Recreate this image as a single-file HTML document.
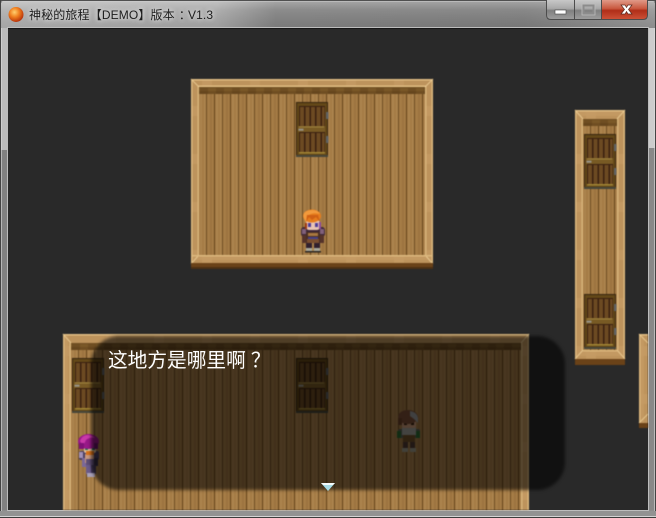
<!DOCTYPE html>
<html lang="zh"><head><meta charset="utf-8"><title>神秘的旅程</title>
<style>
html,body{margin:0;padding:0;background:#8c8c8c}
#w{position:relative;width:656px;height:518px;overflow:hidden;font-family:"Liberation Sans","Noto Sans CJK SC",sans-serif}
svg{position:absolute;left:0;top:0}
#title{position:absolute;left:29px;top:7px;font-size:12px;line-height:16px;color:#1c1c1c;white-space:nowrap;letter-spacing:.14px;text-shadow:0 0 5px #ddd,0 0 5px #ddd}
#msg{position:absolute;left:108px;top:347px;font-size:19.7px;line-height:24px;color:#fff;white-space:nowrap}
.tc{font-family:"Noto Sans CJK TC",sans-serif;position:relative}
</style></head><body><div id="w">
<svg width="656" height="518" viewBox="0 0 656 518" xmlns="http://www.w3.org/2000/svg">
<defs>
<linearGradient id="tb" x1="0" x2="1" y1="0" y2="0"><stop offset="0" stop-color="#b0b0b0"/><stop offset=".33" stop-color="#a8a8a8"/><stop offset=".42" stop-color="#828282"/><stop offset=".8" stop-color="#7e7e7e"/><stop offset="1" stop-color="#969696"/></linearGradient>
<linearGradient id="tv" x1="0" x2="0" y1="0" y2="1"><stop offset="0" stop-color="#fff" stop-opacity=".32"/><stop offset=".35" stop-color="#fff" stop-opacity=".08"/><stop offset="1" stop-color="#000" stop-opacity=".06"/></linearGradient>
<linearGradient id="cl" x1="0" x2="0" y1="0" y2="1"><stop offset="0" stop-color="#e09a88"/><stop offset=".45" stop-color="#c9583f"/><stop offset=".55" stop-color="#b02e18"/><stop offset="1" stop-color="#cc5036"/></linearGradient>
<linearGradient id="bt" x1="0" x2="0" y1="0" y2="1"><stop offset="0" stop-color="#c8c8c8"/><stop offset=".45" stop-color="#a8a8a8"/><stop offset=".55" stop-color="#808080"/><stop offset="1" stop-color="#9c9c9c"/></linearGradient>
<radialGradient id="orb" cx=".4" cy=".35" r=".7"><stop offset="0" stop-color="#ffd070"/><stop offset=".45" stop-color="#f08020"/><stop offset="1" stop-color="#b02808"/></radialGradient>
<pattern id="pl" width="16" height="24" patternUnits="userSpaceOnUse" x="199">
<rect width="16" height="24" fill="#a57c46"/>
<rect x="1" width="6" height="24" fill="#ac844e"/>
<rect x="3" width="2" height="24" fill="#a47b45"/>
<rect x="11" width="2" height="24" fill="#9c7340"/>
<rect x="7" width="1" height="24" fill="#6e4c22"/>
<rect x="15" width="1" height="24" fill="#66451c"/>
</pattern>
<pattern id="wl" width="16" height="8" patternUnits="userSpaceOnUse"><rect width="16" height="8" fill="#6f4e22"/><rect width="8" height="3" fill="#7a5828"/><rect x="8" y="3" width="8" height="3" fill="#66461e"/></pattern>
<pattern id="fr" width="48" height="48" patternUnits="userSpaceOnUse"><rect width="48" height="48" fill="#bd935c"/><rect x="10" y="0" width="10" height="48" fill="#c69c66" opacity=".6"/><rect x="0" y="10" width="48" height="10" fill="#c69c66" opacity=".6"/></pattern>
<g id="door">
<rect width="32" height="55" fill="#38260f"/>
<rect x="1" y="1" width="30" height="53" fill="#644818"/>
<rect x="3" y="4" width="26" height="20" fill="#3a2010"/>
<rect x="3" y="30" width="26" height="20" fill="#3a2010"/>
<g fill="#6c4a22">
<rect x="4" y="5" width="4" height="19"/><rect x="9.500" y="5" width="4" height="19"/><rect x="15" y="5" width="4" height="19"/><rect x="20.500" y="5" width="4" height="19"/><rect x="26" y="5" width="2.500" height="19"/>
<rect x="4" y="31" width="4" height="19"/><rect x="9.500" y="31" width="4" height="19"/><rect x="15" y="31" width="4" height="19"/><rect x="20.500" y="31" width="4" height="19"/><rect x="26" y="31" width="2.500" height="19"/>
</g>
<rect x="2" y="24" width="27" height="6" fill="#785a24"/>
<rect x="3" y="24.500" width="25" height="1" fill="#a08440"/>
<rect x="3" y="50" width="26" height="1.600" fill="#a08434"/>
<rect x="2.500" y="26.700" width="5" height="2" fill="#98948a"/>
<rect x="30" y="10" width="2.400" height="7" fill="#5c6064"/>
<rect x="30" y="34" width="2.400" height="7" fill="#5c6064"/>
<rect x="0" y="53" width="32" height="2" fill="#46463a"/>
</g>
</defs>

<rect width="656" height="518" fill="#8c8c8c"/>
<rect width="656" height="28" fill="url(#tb)"/>
<rect width="656" height="28" fill="url(#tv)"/>
<path d="M0 0h6q-5 0-6 6zM656 0h-6q5 0 6 6z" fill="#3a3a3a"/>
<rect x="0" y="0" width="656" height="1" fill="#505050"/>
<rect x="1" y="1" width="654" height="1" fill="#d0d0d0" opacity=".5"/>
<rect x="0" y="28" width="8" height="122" fill="#bcbcbc"/>
<rect x="648" y="28" width="8" height="120" fill="#cccccc"/>
<rect x="0" y="150" width="8" height="360" fill="#828282"/>
<rect x="648" y="148" width="8" height="362" fill="#888888"/>
<rect x="0" y="0" width="1" height="518" fill="#444"/>
<rect x="655" y="0" width="1" height="518" fill="#444"/>
<rect x="1" y="28" width="1" height="490" fill="#dcdcdc" opacity=".6"/>
<rect x="654" y="28" width="1" height="490" fill="#dcdcdc" opacity=".6"/>
<rect x="7" y="27" width="642" height="484" fill="#bdbdbd"/>
<rect x="0" y="511" width="656" height="7" fill="#929292"/>
<rect x="0" y="516" width="656" height="1" fill="#d4d4d4"/>
<rect x="0" y="517" width="656" height="1" fill="#3c3c3c"/>

<circle cx="16" cy="14.500" r="7.500" fill="url(#orb)"/>

<!-- buttons -->
<path d="M546 0v15q0 5 5 5h92q5 0 5-5V0z" fill="#4c4c4c"/>
<path d="M547 0v15q0 4 4 4h23V0z" fill="url(#bt)"/>
<rect x="575" y="0" width="26" height="19" fill="url(#bt)"/>
<path d="M602 0v19h41q4 0 4-4V0z" fill="url(#cl)"/>
<rect x="555" y="10" width="11" height="4" fill="#fff" stroke="#444" stroke-width=".6"/>
<rect x="583.500" y="5.500" width="10" height="8" fill="none" stroke="#8c8c8c" stroke-width="2"/>
<rect x="582" y="4" width="13" height="11" fill="none" stroke="#bcbcbc" stroke-width=".8"/>
<path d="M621 5l4 0 1.500 2.500L628 5h4l-3.500 4.500 3.500 4.500h-4l-1.500-2.500L625 14h-4l3.500-4.500z" fill="#fff" stroke="#5a2a20" stroke-width=".7"/>

<!-- client -->
<rect x="8" y="28" width="640" height="482" fill="#292929"/>
<rect x="8" y="28" width="640" height="1" fill="#161616"/>

<g style="filter:blur(.5px)">
<!-- Room 1 -->
<rect x="191" y="79" width="242" height="190" fill="url(#fr)"/>
<rect x="199" y="87" width="226" height="168" fill="url(#pl)"/>
<rect x="199" y="87" width="226" height="7" fill="url(#wl)"/>
<rect x="191" y="79" width="242" height="1.500" fill="#e2bf85"/>
<rect x="191" y="79" width="1.500" height="185" fill="#dcb87e"/>
<rect x="431.500" y="79" width="1.500" height="185" fill="#dcb87e"/>
<rect x="197.500" y="85.500" width="229" height="1.500" fill="#e2bf85"/>
<rect x="197.500" y="87" width="1.500" height="168" fill="#d8b47a"/>
<rect x="425" y="87" width="1.500" height="168" fill="#d8b47a"/>
<path d="M191 79l8 8M433 79l-8 8M191 264l8-9M433 264l-8-9" stroke="#e6c68e" stroke-width="1"/>
<rect x="191" y="255" width="242" height="1.500" fill="#dcb87e"/>
<rect x="191" y="263" width="242" height="6" fill="#6a4218"/>
<rect x="191" y="267" width="242" height="2" fill="#4c3014"/>
<use href="#door" x="296" y="102"/>

<!-- Room 2 -->
<rect x="575" y="110" width="50" height="255" fill="url(#fr)"/>
<rect x="583" y="119" width="34" height="231" fill="url(#pl)"/>
<rect x="583" y="119" width="34" height="7" fill="url(#wl)"/>
<rect x="575" y="110" width="50" height="1.500" fill="#e2bf85"/>
<rect x="575" y="110" width="1.500" height="249" fill="#dcb87e"/>
<rect x="623.500" y="110" width="1.500" height="249" fill="#dcb87e"/>
<rect x="581.500" y="119" width="1.500" height="231" fill="#d8b47a"/>
<rect x="617" y="119" width="1.500" height="231" fill="#d8b47a"/>
<rect x="583" y="350" width="34" height="1.500" fill="#dcb87e"/>
<path d="M575 110l8 9M625 110l-8 9M575 359l8-9M625 359l-8-9" stroke="#e6c68e" stroke-width="1"/>
<rect x="575" y="359" width="50" height="6" fill="#6a4218"/>
<use href="#door" x="584" y="134"/>
<use href="#door" x="584" y="294"/>

<!-- Room 3 -->
<rect x="639" y="334" width="9" height="94" fill="url(#fr)"/>
<rect x="639" y="334" width="1.500" height="89" fill="#dcb87e"/>
<rect x="639" y="334" width="9" height="1.500" fill="#e2bf85"/>
<path d="M639 334l9 9M639 423l9-9" stroke="#e6c68e" stroke-width="1"/>
<rect x="639" y="423" width="9" height="5" fill="#6a4218"/>

<!-- Room 4 -->
<rect x="63" y="334" width="466" height="176" fill="url(#fr)"/>
<rect x="71" y="343" width="450" height="167" fill="url(#pl)"/>
<rect x="71" y="343" width="450" height="7" fill="url(#wl)"/>
<rect x="63" y="334" width="466" height="1.500" fill="#e2bf85"/>
<rect x="63" y="334" width="1.500" height="176" fill="#dcb87e"/>
<rect x="527.500" y="334" width="1.500" height="176" fill="#dcb87e"/>
<rect x="69.500" y="343" width="1.500" height="167" fill="#d8b47a"/>
<rect x="521" y="343" width="1.500" height="167" fill="#d8b47a"/>
<path d="M63 334l8 9M529 334l-8 9" stroke="#e6c68e" stroke-width="1"/>
<use href="#door" x="72" y="358"/>
<use href="#door" x="296" y="358"/>

<!-- Hero -->
<g>
<rect x="301" y="227" width="24" height="10" rx="3" fill="#3e2838"/>
<rect x="302" y="229" width="4" height="5" fill="#80607a"/>
<rect x="320" y="229" width="4" height="5" fill="#80607a"/>
<rect x="302" y="235" width="5" height="8" fill="#55332a"/>
<rect x="319" y="235" width="5" height="8" fill="#55332a"/>
<rect x="306" y="232" width="14" height="11" fill="#4a2e24"/>
<rect x="308" y="233" width="10" height="3" fill="#a87840"/>
<rect x="308" y="237" width="10" height="2" fill="#44408a"/>
<rect x="307" y="239" width="12" height="4" fill="#7a4e30"/>
<rect x="306" y="243" width="6" height="6" fill="#30202e"/>
<rect x="314" y="243" width="6" height="6" fill="#30202e"/>
<rect x="306" y="248" width="6" height="3" fill="#a8a89a"/>
<rect x="314" y="248" width="6" height="3" fill="#a8a89a"/>
<rect x="305" y="251" width="16" height="1.500" fill="#2a2420"/>
<rect x="306" y="220" width="14" height="10" rx="3" fill="#e8c4b4"/>
<rect x="308" y="223" width="3" height="4" fill="#4c3c98"/>
<rect x="315" y="223" width="3" height="4" fill="#4c3c98"/>
<rect x="305" y="223" width="2" height="6" fill="#a03810"/>
<rect x="319" y="222" width="2" height="7" fill="#8a4aa0"/>
<ellipse cx="312" cy="216" rx="9" ry="6.500" fill="#e67c1c"/>
<path d="M303 216q1-6 9-6 6 0 8 4-7-2-11 1l-3 8z" fill="#f29a3c"/>
<path d="M306 222l3-5 3 3 4-3 4 5-2-7h-11z" fill="#d06014"/>
</g>

<!-- Pink -->
<g>
<rect x="79" y="451" width="20" height="9" rx="2" fill="#4a3e60"/>
<rect x="79" y="452" width="4" height="6" fill="#a090b8"/>
<rect x="82" y="458" width="4" height="9" fill="#7a6898"/>
<rect x="94" y="458" width="4" height="8" fill="#352c44"/>
<rect x="85" y="454" width="9" height="9" fill="#c89880"/>
<rect x="86" y="459" width="8" height="6" fill="#5e4e74"/>
<rect x="86" y="465" width="5" height="9" fill="#6a5a88"/>
<rect x="91" y="465" width="5" height="9" fill="#443858"/>
<rect x="87" y="473" width="8" height="4" fill="#a8a0b8"/>
<rect x="84" y="446" width="12" height="7" rx="2" fill="#e0c0a0"/>
<rect x="85" y="447" width="3" height="3" fill="#1e6a4a"/>
<rect x="92" y="447" width="3" height="3" fill="#1e6a4a"/>
<rect x="86" y="451" width="8" height="4" fill="#d87018"/>
<ellipse cx="88.500" cy="441.500" rx="10.500" ry="7.500" fill="#981888"/>
<path d="M80 441q2-6 8-6 5 0 7 3-6-1-9 2l-3 6z" fill="#c838a8"/>
<rect x="79" y="443" width="5" height="6" fill="#801078"/>
<rect x="94" y="443" width="4" height="6" fill="#681068"/>
</g>

<!-- Grey -->
<g>
<rect x="398" y="429" width="22" height="9" rx="2" fill="#5a5e54"/>
<rect x="397" y="431" width="4" height="7" fill="#2c6a30"/>
<rect x="416" y="431" width="4" height="7" fill="#2c6a30"/>
<rect x="402" y="427" width="14" height="8" fill="#a0a098"/>
<rect x="403" y="435" width="12" height="7" fill="#6e5028"/>
<rect x="403" y="442" width="5" height="7" fill="#503a32"/>
<rect x="410" y="442" width="5" height="7" fill="#503a32"/>
<rect x="402" y="448" width="6" height="4" fill="#9c9888"/>
<rect x="410" y="448" width="6" height="4" fill="#9c9888"/>
<rect x="402" y="419" width="14" height="9" rx="2" fill="#c89878"/>
<rect x="404" y="422" width="3" height="3" fill="#301808"/>
<rect x="411" y="422" width="3" height="3" fill="#301808"/>
<ellipse cx="408" cy="417" rx="10" ry="7" fill="#7a4e36"/>
<path d="M410 411q7 1 8 7v5l-4-4-4-3z" fill="#989898"/>
<rect x="398" y="418" width="4" height="7" fill="#6a4028"/>
</g>
</g>

<!-- Message window -->
<rect x="91" y="336" width="474" height="154" rx="28" ry="28" fill="#000" fill-opacity=".58" style="filter:blur(1.5px)"/>
<path d="M321 483h14l-7 8z" fill="#a8dbe6"/>
<path d="M321 483h14l-2 2h-10z" fill="#f4fbfc"/>
</svg>
<div id="title">神秘的旅程【DEMO】版本<span class="tc" style="left:4px">：</span><span style="margin-left:1px">V1.3</span></div>
<div id="msg">这地方是哪里啊<span class="tc" style="left:5px">？</span></div>
</div></body></html>
